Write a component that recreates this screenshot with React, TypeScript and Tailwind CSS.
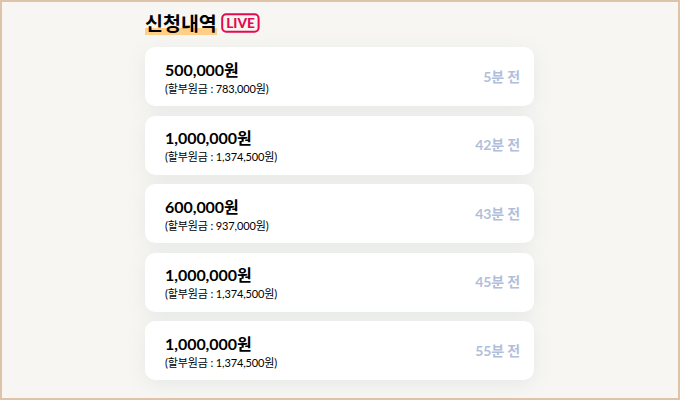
const rows = [
  { amount: "500,000원", principal: "783,000원", ago: "5분 전" },
  { amount: "1,000,000원", principal: "1,374,500원", ago: "42분 전" },
  { amount: "600,000원", principal: "937,000원", ago: "43분 전" },
  { amount: "1,000,000원", principal: "1,374,500원", ago: "45분 전" },
  { amount: "1,000,000원", principal: "1,374,500원", ago: "55분 전" },
];

export default function App() {
  return (
    <div className="h-[400px] w-[680px] overflow-hidden border-2 border-[#dfc3a9] bg-[#f7f6f2] font-['Lato','Noto_Sans_CJK_KR',sans-serif] text-black">
      <div className="ml-[143px] w-[389px] pt-[9px]">
        <div className="flex h-[36px] items-start">
          <h1 className="mt-px h-[23px] w-[72px] whitespace-nowrap bg-linear-to-b from-transparent from-[68%] to-[#ffcf87] to-[68%] text-[19.5px] leading-[24px] font-bold">신청내역</h1>
          <svg className="mt-[2px] ml-[4px]" width="39" height="20" viewBox="0 0 39 20">
            <rect x="1.2" y="1.2" width="36.4" height="17.6" rx="4" fill="none" stroke="#e5094f" strokeWidth="2" />
            <text x="5.2" y="14.8" textLength="28.6" lengthAdjust="spacingAndGlyphs" className="fill-[#e5094f] font-['Lato',sans-serif] text-[14px] font-black">LIVE</text>
          </svg>
        </div>
        <div className="flex flex-col gap-[9.6px]">
          {rows.map((r, i) => (
            <div key={i} className="flex h-[59px] items-center justify-between rounded-[10px] bg-white pr-[14px] pl-[20px] shadow-[0_4px_20px_rgba(90,130,150,0.1)]">
              <div className="pt-[3.2px]">
                <div className="text-[16px] leading-[20px] font-bold tracking-[-0.05px]">{r.amount}</div>
                <div className="text-[11px] leading-[17px] tracking-[-0.13px]">(할부원금 : {r.principal})</div>
              </div>
              <div className="pt-[0.2px] text-[14px] leading-[20px] font-bold tracking-[-0.15px] text-[#b0bedb]">{r.ago}</div>
            </div>
          ))}
        </div>
      </div>
    </div>
  );
}
